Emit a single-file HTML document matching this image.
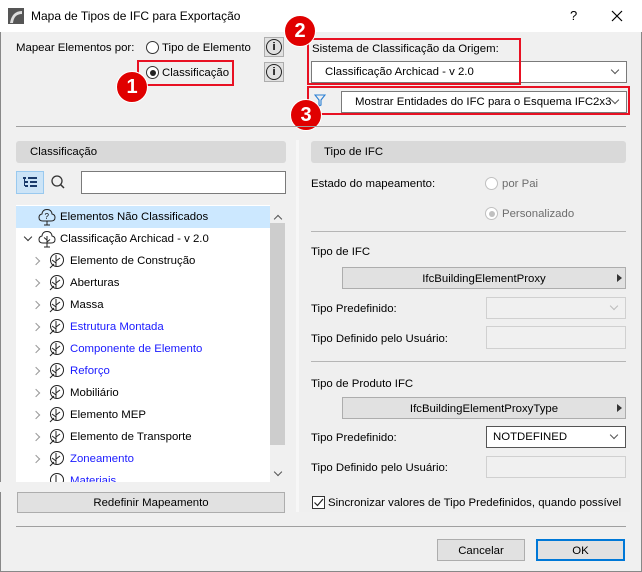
<!DOCTYPE html>
<html><head><meta charset="utf-8"><style>
*{box-sizing:border-box;margin:0;padding:0}
body{width:642px;height:572px;overflow:hidden;background:#f0f0f0;font-family:"Liberation Sans",sans-serif;font-size:11.4px;color:#000;position:relative}
.a{position:absolute;white-space:nowrap}
.t{position:absolute;white-space:nowrap;line-height:14px}
.sep{position:absolute;height:1px;background:#a0a0a0}
.rb{position:absolute;border:2px solid #e81123}
.num{position:absolute;width:32px;height:32px;border-radius:50%;background:#e00000;color:#fff;font-weight:bold;font-size:20px;text-align:center;line-height:31px;border:1px solid #fff}
.radio{position:absolute;width:13px;height:13px;border:1px solid #333;border-radius:50%;background:#fff}
.info{position:absolute;width:20px;height:20px;background:#e1e1e1;border:1px solid #adadad}
.info span{position:absolute;left:1px;top:1px;width:16px;height:16px;border:1.3px solid #222;border-radius:50%;font-size:11px;line-height:14px;text-align:center;font-weight:bold}
.dd{position:absolute;background:#fff;border:1px solid #7a7a7a}
.chev{position:absolute;width:6px;height:6px;border-right:1.2px solid #555;border-bottom:1.2px solid #555;transform:rotate(45deg)}
.btn{position:absolute;background:#e1e1e1;border:1px solid #adadad;text-align:center}
.hdr{position:absolute;background:#d9d9d9;border-radius:3px}
.box{position:absolute;border:1px solid #d0d0d0;background:#f0f0f0}
.rc{position:absolute;width:6px;height:6px;border-right:1.5px solid #999;border-top:1.5px solid #999;transform:rotate(45deg);top:8px}
.blue{color:#1a1aff}
</style></head><body>
<div class="a" style="left:0;top:0;width:642px;height:32px;background:#fff"></div>
<svg class="a" style="left:8px;top:8px" width="16" height="16"><rect width="16" height="16" fill="#555"/><path d="M2 15 Q4 3 14 3 L14 6 Q6 6 5 15Z" fill="#ddd"/></svg>
<div class="t" style="left:31px;top:9px;font-size:12px">Mapa de Tipos de IFC para Exportação</div>
<div class="t" style="left:570px;top:9px;font-size:13px">?</div>
<svg class="a" style="left:611px;top:10px" width="12" height="12"><path d="M1 1L11 11M11 1L1 11" stroke="#000" stroke-width="1.2"/></svg>
<div class="a" style="left:0;top:32px;width:1px;height:540px;background:#888"></div>
<div class="a" style="left:641px;top:32px;width:1px;height:540px;background:#888"></div>
<div class="a" style="left:0;top:571px;width:642px;height:1px;background:#888"></div>

<div class="t" style="left:16px;top:41px">Mapear Elementos por:</div>
<div class="radio" style="left:146px;top:41px"></div>
<div class="t" style="left:162px;top:41px">Tipo de Elemento</div>
<div class="radio" style="left:146px;top:66px"><div style="position:absolute;left:2.5px;top:2.5px;width:6px;height:6px;border-radius:50%;background:#222"></div></div>
<div class="t" style="left:162px;top:66px">Classificação</div>
<div class="info" style="left:264px;top:37px"><span>i</span></div>
<div class="info" style="left:264px;top:62px"><span>i</span></div>
<div class="rb" style="left:137px;top:60px;width:97px;height:26px"></div>

<div class="t" style="left:312px;top:42px">Sistema de Classificação da Origem:</div>
<div class="dd" style="left:311px;top:61px;width:316px;height:22px"><div class="t" style="left:13px;top:3px">Classificação Archicad - v 2.0</div><div class="chev" style="left:300px;top:5px"></div></div>
<div class="rb" style="left:307px;top:38px;width:214px;height:47px"></div>
<svg class="a" style="left:314px;top:94px" width="12" height="13"><path d="M1 1H11L7 6V11L5 12V6Z" fill="none" stroke="#2a7fd4" stroke-width="1.1"/></svg>
<div class="dd" style="left:341px;top:91px;width:286px;height:22px"><div class="t" style="left:13px;top:3px">Mostrar Entidades do IFC para o Esquema IFC2x3</div><div class="chev" style="left:270px;top:5px"></div></div>
<div class="rb" style="left:307px;top:86px;width:323px;height:29px"></div>

<div class="num" style="left:116px;top:71px">1</div>
<div class="num" style="left:284px;top:15px">2</div>
<div class="num" style="left:290px;top:99px">3</div>

<div class="sep" style="left:16px;top:126px;width:610px"></div>

<div class="hdr" style="left:16px;top:141px;width:270px;height:22px"><div class="t" style="left:14px;top:4px">Classificação</div></div>
<div class="a" style="left:16px;top:171px;width:28px;height:23px;background:#cce4f7;border:1px solid #99c9ef"></div>
<svg class="a" style="left:22px;top:176px" width="16" height="13"><g fill="#1a3a6a"><rect x="1" y="1" width="3" height="2"/><rect x="6" y="1" width="9" height="2"/><rect x="3" y="5" width="3" height="2"/><rect x="8" y="5" width="7" height="2"/><rect x="3" y="9" width="3" height="2"/><rect x="8" y="9" width="7" height="2"/><rect x="2" y="3" width="1" height="7"/></g></svg>
<svg class="a" style="left:50px;top:174px" width="16" height="16"><circle cx="7" cy="7" r="5" fill="none" stroke="#333" stroke-width="1.3"/><path d="M10.5 10.5L14 14" stroke="#333" stroke-width="1.5"/></svg>
<div class="a" style="left:81px;top:171px;width:205px;height:23px;background:#fff;border:1px solid #7a7a7a"></div>

<div class="a" style="left:16px;top:205px;width:254px;height:277px;background:#fff"></div>
<div class="a" style="left:16px;top:206px;width:254px;height:22px;background:#cce8ff"></div>
<svg class="a" style="left:38px;top:208px" width="18" height="18"><path d="M5 13 Q1 13 1 9.5 Q1 6.5 4 6 Q4.5 1.5 9 1.5 Q13.5 1.5 14 6 Q17 6.5 17 9.5 Q17 13 13 13Z" fill="none" stroke="#222" stroke-width="1"/><path d="M9 13V17M6 17H12" stroke="#222"/><text x="6.5" y="11" font-size="8" font-family="Liberation Sans">?</text></svg>
<div class="t" style="left:60px;top:210px">Elementos Não Classificados</div>
<div class="chev" style="left:25px;top:234px;border-color:#333"></div>
<svg class="a" style="left:38px;top:230px" width="18" height="18"><path d="M5 13 Q1 13 1 9.5 Q1 6.5 4 6 Q4.5 1.5 9 1.5 Q13.5 1.5 14 6 Q17 6.5 17 9.5 Q17 13 13 13Z" fill="none" stroke="#222"/><path d="M9 6V17M9 10L6 7.5M9 12L12 9.5M6 17H12" stroke="#222" fill="none"/></svg>
<div class="t" style="left:60px;top:232px">Classificação Archicad - v 2.0</div>

<div class="rc" style="left:33px;top:258px"></div><svg class="a" style="left:48px;top:252px" width="17" height="17"><circle cx="9" cy="8" r="6.5" fill="none" stroke="#222"/><path d="M8 3V14M8 9L12 6M8 11L4 8M2 16L6 12" stroke="#222" fill="none"/></svg><div class="t" style="left:70px;top:254px">Elemento de Construção</div>
<div class="rc" style="left:33px;top:280px"></div><svg class="a" style="left:48px;top:274px" width="17" height="17"><circle cx="9" cy="8" r="6.5" fill="none" stroke="#222"/><path d="M8 3V14M8 9L12 6M8 11L4 8M2 16L6 12" stroke="#222" fill="none"/></svg><div class="t" style="left:70px;top:276px">Aberturas</div>
<div class="rc" style="left:33px;top:302px"></div><svg class="a" style="left:48px;top:296px" width="17" height="17"><circle cx="9" cy="8" r="6.5" fill="none" stroke="#222"/><path d="M8 3V14M8 9L12 6M8 11L4 8M2 16L6 12" stroke="#222" fill="none"/></svg><div class="t" style="left:70px;top:298px">Massa</div>
<div class="rc" style="left:33px;top:324px"></div><svg class="a" style="left:48px;top:318px" width="17" height="17"><circle cx="9" cy="8" r="6.5" fill="none" stroke="#222"/><path d="M8 3V14M8 9L12 6M8 11L4 8M2 16L6 12" stroke="#222" fill="none"/></svg><div class="t blue" style="left:70px;top:320px">Estrutura Montada</div>
<div class="rc" style="left:33px;top:346px"></div><svg class="a" style="left:48px;top:340px" width="17" height="17"><circle cx="9" cy="8" r="6.5" fill="none" stroke="#222"/><path d="M8 3V14M8 9L12 6M8 11L4 8M2 16L6 12" stroke="#222" fill="none"/></svg><div class="t blue" style="left:70px;top:342px">Componente de Elemento</div>
<div class="rc" style="left:33px;top:368px"></div><svg class="a" style="left:48px;top:362px" width="17" height="17"><circle cx="9" cy="8" r="6.5" fill="none" stroke="#222"/><path d="M8 3V14M8 9L12 6M8 11L4 8M2 16L6 12" stroke="#222" fill="none"/></svg><div class="t blue" style="left:70px;top:364px">Reforço</div>
<div class="rc" style="left:33px;top:390px"></div><svg class="a" style="left:48px;top:384px" width="17" height="17"><circle cx="9" cy="8" r="6.5" fill="none" stroke="#222"/><path d="M8 3V14M8 9L12 6M8 11L4 8M2 16L6 12" stroke="#222" fill="none"/></svg><div class="t" style="left:70px;top:386px">Mobiliário</div>
<div class="rc" style="left:33px;top:412px"></div><svg class="a" style="left:48px;top:406px" width="17" height="17"><circle cx="9" cy="8" r="6.5" fill="none" stroke="#222"/><path d="M8 3V14M8 9L12 6M8 11L4 8M2 16L6 12" stroke="#222" fill="none"/></svg><div class="t" style="left:70px;top:408px">Elemento MEP</div>
<div class="rc" style="left:33px;top:434px"></div><svg class="a" style="left:48px;top:428px" width="17" height="17"><circle cx="9" cy="8" r="6.5" fill="none" stroke="#222"/><path d="M8 3V14M8 9L12 6M8 11L4 8M2 16L6 12" stroke="#222" fill="none"/></svg><div class="t" style="left:70px;top:430px">Elemento de Transporte</div>
<div class="rc" style="left:33px;top:456px"></div><svg class="a" style="left:48px;top:450px" width="17" height="17"><circle cx="9" cy="8" r="6.5" fill="none" stroke="#222"/><path d="M8 3V14M8 9L12 6M8 11L4 8M2 16L6 12" stroke="#222" fill="none"/></svg><div class="t blue" style="left:70px;top:452px">Zoneamento</div>
<div class="a" style="left:16px;top:472px;width:254px;height:10px;overflow:hidden"><svg class="a" style="left:32px;top:0px" width="17" height="10"><circle cx="9" cy="8" r="6.5" fill="none" stroke="#222"/><path d="M8 3V14" stroke="#222"/></svg><div class="t blue" style="left:54px;top:2px">Materiais</div></div>
<div class="a" style="left:0;top:482px;width:295px;height:10px;background:#f0f0f0"></div>
<div class="a" style="left:270px;top:205px;width:16px;height:277px;background:#f0f0f0"></div>
<div class="a" style="left:270px;top:223px;width:15px;height:222px;background:#cdcdcd"></div>
<div class="chev" style="left:275px;top:216px;transform:rotate(-135deg);border-color:#555"></div>
<div class="chev" style="left:275px;top:469px;border-color:#555"></div>

<div class="btn" style="left:17px;top:492px;width:268px;height:21px"><div class="t" style="left:0;width:266px;top:3px">Redefinir Mapeamento</div></div>

<div class="a" style="left:296px;top:140px;width:334px;height:372px;background:#efefef;border-left:3px solid #f7f7f7"></div>
<div class="hdr" style="left:311px;top:141px;width:315px;height:22px"><div class="t" style="left:13px;top:4px">Tipo de IFC</div></div>
<div class="t" style="left:311px;top:177px">Estado do mapeamento:</div>
<div class="radio" style="left:485px;top:177px;border-color:#c0c0c0;background:#fff"></div>
<div class="t" style="left:502px;top:177px;color:#6d6d6d">por Pai</div>
<div class="radio" style="left:485px;top:207px;border-color:#c0c0c0"><div style="position:absolute;left:2.5px;top:2.5px;width:6px;height:6px;border-radius:50%;background:#c0c0c0"></div></div>
<div class="t" style="left:502px;top:207px;color:#6d6d6d">Personalizado</div>
<div class="sep" style="left:311px;top:231px;width:315px;background:#b5b5b5"></div>
<div class="t" style="left:311px;top:245px">Tipo de IFC</div>
<div class="btn" style="left:342px;top:267px;width:284px;height:22px"><div class="t" style="left:0;width:282px;top:4px">IfcBuildingElementProxy</div><svg class="a" style="left:274px;top:6px" width="5" height="8"><path d="M0 0L5 4L0 8Z" fill="#333"/></svg></div>
<div class="t" style="left:311px;top:302px">Tipo Predefinido:</div>
<div class="box" style="left:486px;top:297px;width:140px;height:22px"><div class="chev" style="left:124px;top:5px;border-color:#bbb"></div></div>
<div class="t" style="left:311px;top:332px">Tipo Definido pelo Usuário:</div>
<div class="box" style="left:486px;top:326px;width:140px;height:23px"></div>
<div class="sep" style="left:311px;top:361px;width:315px;background:#b5b5b5"></div>
<div class="t" style="left:311px;top:377px">Tipo de Produto IFC</div>
<div class="btn" style="left:342px;top:397px;width:284px;height:22px"><div class="t" style="left:0;width:282px;top:4px">IfcBuildingElementProxyType</div><svg class="a" style="left:274px;top:6px" width="5" height="8"><path d="M0 0L5 4L0 8Z" fill="#333"/></svg></div>
<div class="t" style="left:311px;top:431px">Tipo Predefinido:</div>
<div class="dd" style="left:486px;top:426px;width:140px;height:22px;border-color:#555"><div class="t" style="left:6px;top:3px">NOTDEFINED</div><div class="chev" style="left:124px;top:5px"></div></div>
<div class="t" style="left:311px;top:461px">Tipo Definido pelo Usuário:</div>
<div class="box" style="left:486px;top:456px;width:140px;height:22px"></div>
<div class="a" style="left:312px;top:496px;width:13px;height:13px;border:1px solid #333;background:#fff"></div>
<svg class="a" style="left:313px;top:497px" width="11" height="11"><path d="M1.5 5.5L4.5 8.5L10 2" stroke="#222" stroke-width="1.2" fill="none"/></svg>
<div class="t" style="left:328px;top:496px">Sincronizar valores de Tipo Predefinidos, quando possível</div>

<div class="sep" style="left:16px;top:526px;width:610px"></div>
<div class="btn" style="left:437px;top:539px;width:88px;height:22px"><div class="t" style="left:0;width:86px;top:4px">Cancelar</div></div>
<div class="btn" style="left:536px;top:539px;width:89px;height:22px;border:2px solid #0078d7"><div class="t" style="left:0;width:85px;top:3px">OK</div></div>
</body></html>
